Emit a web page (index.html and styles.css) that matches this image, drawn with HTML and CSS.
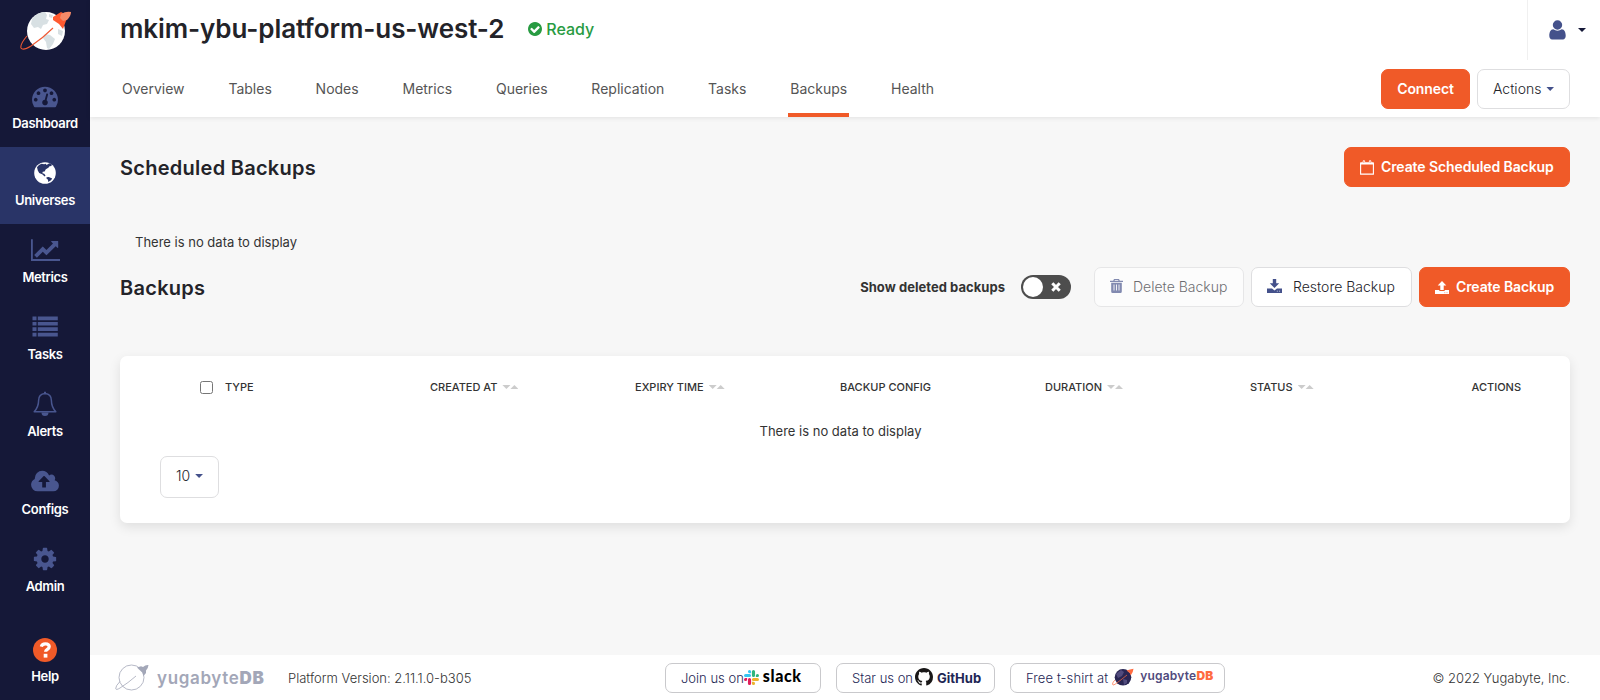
FILE: index.html
```html
<!DOCTYPE html>
<html lang="en">
<head>
<meta charset="utf-8">
<title>mkim-ybu-platform-us-west-2 | Backups</title>
<link rel="stylesheet" href="styles.css">
</head>
<body>
<div class="app">
  <aside class="sidebar">
    <a class="brand">
      <svg width="52" height="40" viewBox="0 0 52 40">
        <circle cx="26" cy="20" r="19" fill="#fff"/>
        <path fill="#d8e0e3" d="M12 8q5-7 13-7l2 3-1 4 3 1-2 4-4 1-2 4-3-2-4 1-3-4zM29 3l4 1-1 3-3-1zM25 23l5 1 5 4-2 5-4 5-2-1-1-6-3-4zM38 18l5 2-1 5-4-2z"/>
        <path d="M33 17Q23 27 11 35 3 40 1 37 0 33 7 25" fill="none" stroke="#f05a35" stroke-width="1.1"/>
        <path fill="#ff5a30" d="M33 6l8-5 4 2 2 4-4 11-4-5-6-4z"/>
        <path fill="#f58a68" d="M41 3q5-3 10-2 0 4-4 8l-4 1-3-3z"/>
      </svg>
    </a>
    <nav class="side-nav">
      <a class="side-item">
        <svg class="side-icon" width="26" height="26" viewBox="0 0 1792 1792"><path d="M384 1152q0-53-37.500-90.500t-90.500-37.500-90.500 37.500-37.500 90.500 37.500 90.500 90.500 37.500 90.500-37.500 37.500-90.500zm192-448q0-53-37.500-90.500t-90.500-37.500-90.500 37.500-37.500 90.500 37.500 90.500 90.500 37.500 90.500-37.500 37.500-90.500zm428 481l101-382q6-26-7.500-48.500t-38.500-29.500-48 6.500-30 39.500l-101 382q-60 5-107 43.500t-63 98.500q-20 77 20 146t117 89 146-20 89-117q16-60-6-117t-72-91zm660-33q0-53-37.500-90.500t-90.500-37.500-90.500 37.500-37.500 90.500 37.500 90.500 90.500 37.500 90.500-37.500 37.500-90.500zm-640-640q0-53-37.500-90.500t-90.500-37.500-90.500 37.500-37.500 90.500 37.500 90.500 90.500 37.500 90.500-37.500 37.500-90.500zm448 192q0-53-37.500-90.500t-90.500-37.500-90.500 37.500-37.500 90.500 37.500 90.500 90.500 37.500 90.500-37.500 37.500-90.500zm320 448q0 261-141 483-19 29-54 29h-1402q-35 0-54-29-141-221-141-483 0-182 71-348t191-286 286-191 348-71 348 71 286 191 191 286 71 348z"/></svg>
        <span>Dashboard</span>
      </a>
      <a class="side-item active">
        <svg class="side-icon" width="26" height="26" viewBox="0 0 26 26"><circle cx="13" cy="13" r="10.800"/><g fill="#293467"><path d="M9.500 3.800L7 5 5 7.200l.8 3.200 1.400 2.500 3 1.300 2.500 2.300.8-.9-1.300-1.800-1.800-.6.300-1.500 1.900-.1 1.200-2.300 2.600-1.500 1.100-1.500 2-.3.200-1.700-2.200-1-1.500.6-1.300 1.200-1-1.300-1.500.4z"/><path d="M14.500 17.300l2.300-.2 3.400 1.300-1.200 1.900-2.800 1.700-.2-2.200-1.500-1.300z"/></g></svg>
        <span>Universes</span>
      </a>
      <a class="side-item">
        <svg class="side-icon" width="29" height="26" viewBox="0 0 2048 1792"><path d="M2048 1536v128h-2048v-1536h128v1408h1920zm-128-1248v435q0 21-19.500 29.500t-35.500-7.500l-121-121-633 633q-10 10-23 10t-23-10l-233-233-416 416-192-192 585-585q10-10 23-10t23 10l233 233 464-464-121-121q-16-16-7.500-35.500t29.500-19.500h435q14 0 23 9t9 23z"/></svg>
        <span>Metrics</span>
      </a>
      <a class="side-item">
        <svg class="side-icon" width="26" height="26" viewBox="0 0 26 26"><path d="M.5 2.500h4v3.700h-4zM5.800 2.500h20v3.700h-20zM.5 7.900h4v3.700h-4zM5.800 7.900h20v3.700h-20zM.5 13.300h4v3.700h-4zM5.800 13.300h20v3.700h-20zM.5 18.700h4v3.700h-4zM5.800 18.700h20v3.700h-20z"/></svg>
        <span>Tasks</span>
      </a>
      <a class="side-item">
        <svg class="side-icon" width="26" height="26" viewBox="0 0 26 26"><path d="M13 2.600c-4 .3-6.400 3-6.400 7 0 5-1.400 8-4.400 11.200h21.600c-3-3.200-4.400-6.200-4.400-11.200 0-4-2.400-6.700-6.400-7z" fill="none" stroke="#49568f" stroke-width="1.500" stroke-linejoin="round"/><path d="M12 .8h2v2h-2zM9.500 21.400h7a3.500 3.500 0 0 1-7 0z"/></svg>
        <span>Alerts</span>
      </a>
      <a class="side-item configs">
        <svg class="side-icon" width="28" height="26" viewBox="0 0 1920 1792"><path d="M1280 864q0-14-9-23l-352-352q-9-9-23-9t-23 9l-351 351q-10 12-10 24 0 14 9 23t23 9h224v352q0 13 9.500 22.500t22.500 9.500h192q13 0 22.500-9.500t9.500-22.500v-352h224q13 0 22.500-9.500t9.500-22.500zm640 288q0 159-112.500 271.500t-271.500 112.500h-1088q-185 0-316.500-131.500t-131.500-316.500q0-130 70-240t188-165q-2-30-2-43 0-212 150-362t362-150q156 0 285.500 87t188.500 231q71-62 166-62 106 0 181 75t75 181q0 76-41 138 130 31 213.500 135.500t83.500 238.500z"/></svg>
        <span>Configs</span>
      </a>
      <a class="side-item">
        <svg class="side-icon" width="26" height="26" viewBox="0 0 1792 1792"><path d="M1152 896q0-106-75-181t-181-75-181 75-75 181 75 181 181 75 181-75 75-181zm512-109v222q0 12-8 23t-20 13l-185 28q-19 54-39 91 35 50 107 138 10 12 10 25t-9 23q-27 37-99 108t-94 71q-12 0-26-9l-138-108q-44 23-91 38-16 136-29 186-7 28-36 28h-222q-14 0-24.500-8.500t-11.500-21.500l-28-184q-49-16-90-37l-141 107q-10 9-25 9-14 0-25-11-126-114-165-168-7-10-7-23 0-12 8-23 15-21 51-66.500t54-70.500q-27-50-41-99l-183-27q-13-2-21-12.500t-8-23.500v-222q0-12 8-23t19-13l186-28q14-46 39-92-40-57-107-138-10-12-10-24 0-10 9-23 26-36 98.500-107.500t94.500-71.500q13 0 26 10l138 107q44-23 91-38 16-136 29-186 7-28 36-28h222q14 0 24.500 8.500t11.500 21.500l28 184q49 16 90 37l142-107q9-9 24-9 13 0 25 10 129 119 165 170 7 8 7 22 0 12-8 23-15 21-51 66.500t-54 70.500q26 50 41 98l183 28q13 2 21 12.500t8 23.500z"/></svg>
        <span>Admin</span>
      </a>
    </nav>
    <a class="side-item help">
      <svg width="24" height="24" viewBox="0 0 24 24"><circle cx="12" cy="12" r="12" fill="#f05a28"/><path d="M8.300 8.600c.5-1.900 2-2.800 4-2.800 2.300 0 3.900 1.200 3.900 3 0 2.700-3.600 2.500-3.600 5" fill="none" stroke="#fff" stroke-width="3.200"/><path d="M10.700 15.800h3.700v3.800h-3.700z" fill="#fff"/></svg>
      <span>Help</span>
    </a>
  </aside>

  <div class="page">
    <header class="header">
      <div class="title-row">
        <h1>mkim-ybu-platform-us-west-2</h1>
        <span class="status"><svg width="14" height="14" viewBox="128 128 1536 1536"><path fill="#289b42" d="M1412 734q0-28-18-46l-91-90q-19-19-45-19t-45 19l-408 407-226-226q-19-19-45-19t-45 19l-91 90q-18 18-18 46 0 27 18 45l362 362q19 19 45 19 27 0 46-19l543-543q18-18 18-45zm252 162q0 209-103 385.500t-279.500 279.500-385.500 103-385.500-103-279.500-279.500-103-385.500 103-385.500 279.500-279.500 385.500-103 385.500 103 279.500 279.500 103 385.500z"/></svg>Ready</span>
        <div class="user-menu">
          <svg width="17" height="20" viewBox="0 0 17 20"><path fill="#44518b" d="M13.200 5a4.700 4.700 0 1 1-9.400 0 4.700 4.700 0 0 1 9.400 0zM4.300 9.200c2.500 1.900 5.900 1.900 8.400 0 2.800.1 4 3.200 4 6.600 0 2-1 3.700-2.800 3.700H3.100C1.300 19.500.3 17.800.3 15.800c0-3.400 1.200-6.500 4-6.600z"/></svg>
          <i class="caret caret-dark"></i>
        </div>
      </div>
      <div class="tab-row">
        <nav class="tabs">
          <a>Overview</a><a>Tables</a><a>Nodes</a><a>Metrics</a><a>Queries</a><a>Replication</a><a>Tasks</a><a class="active">Backups</a><a>Health</a>
        </nav>
        <div class="header-actions">
          <button class="btn primary connect">Connect</button>
          <button class="btn actions">Actions<i class="caret"></i></button>
        </div>
      </div>
    </header>

    <main class="content">
      <div class="section-head">
        <h2>Scheduled Backups</h2>
        <button class="btn primary scheduled"><svg width="14" height="15" viewBox="0 0 14 15"><path d="M.6 3h12.800v11.100H.6zM3.900 4V.8M10.100 4V.8" fill="none" stroke="#fff" stroke-width="1.100"/><path d="M.6 2.500h12.800v2H.6zM2.700 1q1.200-1.500 2.400 0v2.500H2.700zM8.900 1q1.200-1.500 2.400 0v2.500H8.900z" fill="#fff"/><path d="M3.900 1.200v1.600M10.100 1.200v1.600" stroke="#f05a28" stroke-width=".8"/></svg><span>Create Scheduled Backup</span></button>
      </div>
      <p class="empty-note">There is no data to display</p>
      <div class="section-head backups-head">
        <h2>Backups</h2>
        <div class="toolbar">
          <span class="toggle-label">Show deleted backups</span>
          <span class="toggle"><i class="knob"></i><svg width="10" height="10" viewBox="0 0 10 10"><path d="M1.300 1.300l7.400 7.400M8.700 1.300L1.300 8.700" stroke="#fff" stroke-width="3"/></svg></span>
          <button class="btn delete" disabled><svg width="13" height="14" viewBox="0 0 13 14"><path fill="#44518b" d="M4 0h5l.8 1.800H13v1.300H0V1.800h3.200zM4.900 1l-.4.800h4L8.100 1zM1.200 3.800h10.600V12.500q0 1.500-1.400 1.500H2.600q-1.400 0-1.400-1.500z"/><path d="M4 5.500v6M6.500 5.500v6M9 5.500v6" stroke="#fff" stroke-width=".9"/></svg><span>Delete Backup</span></button>
          <button class="btn restore"><svg width="15" height="14" viewBox="0 0 15 14"><path fill="#44518b" d="M5.800 0h3.400v4.200h3L7.500 8.900 2.800 4.200h3zM0 9.400h5L7.500 11.400 10 9.400h5V14H0z"/><path d="M9.800 12.200h1.100M12 12.200h1.100" stroke="#fff" stroke-width=".6"/></svg><span>Restore Backup</span></button>
          <button class="btn primary create"><svg width="14" height="13" viewBox="0 0 14 13"><path fill="#fff" d="M7 0l4.300 4.400H8.700V9H5.300V4.400H2.700zM0 9h4.300v1h5.400V9H14v4H0z"/><path d="M9.300 11.700h1M11.500 11.700h1" stroke="#f05a28" stroke-width=".6"/></svg><span>Create Backup</span></button>
        </div>
      </div>

      <section class="card">
        <div class="table-head">
          <span class="check"><input type="checkbox" aria-label="Select all"></span>
          <span>TYPE</span>
          <span>CREATED AT<i class="sort"></i></span>
          <span>EXPIRY TIME<i class="sort"></i></span>
          <span>BACKUP CONFIG</span>
          <span>DURATION<i class="sort"></i></span>
          <span>STATUS<i class="sort"></i></span>
          <span class="last">ACTIONS</span>
        </div>
        <p class="table-empty">There is no data to display</p>
        <button class="btn page-size">10<i class="caret"></i></button>
      </section>
    </main>

    <footer class="footer">
      <div class="footer-brand">
        <svg width="34" height="27" viewBox="0 0 34 27"><g fill="none" stroke="#a3a7b8" stroke-width=".8"><circle cx="16.500" cy="13.500" r="12.500"/><path d="M21 12Q13 19 5 24 1 26.500.7 24.500.5 22 5 17.500"/></g><path fill="#a3a7b8" d="M22 3.500L26 2.200 28 3Q30.500.7 33.500 1 33.300 4 31 6.500L31 9l-2.500 3-1.200-3.500L24 5.500z"/></svg>
        <span class="yb">yugabyte<b>DB</b></span>
      </div>
      <span class="version">Platform Version: 2.11.1.0-b305</span>
      <div class="links">
        <a class="link slack">Join us on<svg width="15" height="15" viewBox="0 0 122.800 122.800"><path fill="#e01e5a" d="M25.800 77.600a12.900 12.900 0 1 1-12.900-12.900h12.900zM32.300 77.600a12.900 12.900 0 1 1 25.800 0v32.300a12.900 12.900 0 1 1-25.800 0z"/><path fill="#36c5f0" d="M45.200 25.800a12.900 12.900 0 1 1 12.900-12.900v12.900zM45.200 32.300a12.900 12.900 0 1 1 0 25.800H12.900a12.900 12.900 0 1 1 0-25.800z"/><path fill="#2eb67d" d="M97 45.200a12.900 12.900 0 1 1 12.900 12.900H97zM90.500 45.200a12.900 12.900 0 1 1-25.800 0V12.900a12.900 12.900 0 1 1 25.800 0z"/><path fill="#ecb22e" d="M77.600 97a12.900 12.900 0 1 1-12.900 12.900V97zM77.600 90.500a12.900 12.900 0 1 1 0-25.800h32.300a12.900 12.900 0 1 1 0 25.800z"/></svg><b>slack</b></a>
        <a class="link github">Star us on<svg width="18" height="18" viewBox="0 0 16 16"><path fill="#191717" d="M8 0C3.580 0 0 3.580 0 8c0 3.540 2.290 6.530 5.470 7.590.4.070.55-.17.55-.38 0-.19-.01-.82-.01-1.490-2.010.37-2.530-.49-2.690-.94-.09-.23-.48-.94-.82-1.130-.28-.15-.68-.52-.01-.53.63-.01 1.080.58 1.230.82.72 1.210 1.870.87 2.330.66.07-.52.28-.87.51-1.070-1.780-.2-3.640-.89-3.640-3.950 0-.87.31-1.590.82-2.150-.08-.2-.36-1.020.08-2.120 0 0 .67-.21 2.200.82.64-.18 1.320-.27 2-.27s1.360.09 2 .27c1.530-1.040 2.200-.82 2.200-.82.44 1.100.16 1.920.08 2.120.51.56.82 1.270.82 2.150 0 3.070-1.870 3.750-3.650 3.950.29.25.54.73.54 1.480 0 1.070-.01 1.930-.01 2.200 0 .21.15.46.55.38A8.010 8.010 0 0 0 16 8c0-4.420-3.580-8-8-8z"/></svg><b>GitHub</b></a>
        <a class="link shirt">Free t-shirt at<svg width="22" height="18" viewBox="0 0 22 18"><circle cx="11" cy="9.300" r="8.300" fill="#292653"/><path d="M4 6l5-4 3 2-2 4-4 2zM11 11l4 1 0 3-3 2z" fill="#514b7d"/><path d="M15 7Q9 12 3 16.300.5 18 .5 16 .7 14 3 12" fill="none" stroke="#ff6b40" stroke-width=".7"/><path d="M14.500 2.500L18 1.500 21.500.7 20.700 4l-2 3.500-1-2.500z" fill="#ff6b40"/></svg><span class="yb small">yugabyte<b>DB</b></span></a>
      </div>
      <span class="copyright">© 2022 Yugabyte, Inc.</span>
    </footer>
  </div>
</div>
</body>
</html>
```
FILE: styles.css
```css
* { box-sizing: border-box; }
body {
  margin: 0;
  background: #f7f7f7;
  color: #333;
  font: 13px/18px Inter, "Liberation Sans", sans-serif;
  white-space: nowrap;
}
h1, h2, p { margin: 0; }
svg { display: block; flex: none; }
button { font-family: inherit; }

.app { display: flex; height: 700px; overflow: hidden; }

/* Sidebar */
.sidebar {
  width: 90px;
  flex: none;
  display: flex;
  flex-direction: column;
  background: #151838;
}
.brand { height: 70px; padding: 11px 0 0 20px; }
.side-item {
  height: 77.100px;
  padding-top: 13px;
  display: flex;
  flex-direction: column;
  align-items: center;
  gap: 5px;
  color: #fff;
  font-size: 13px;
  font-weight: 600;
  line-height: 18px;
  letter-spacing: -.35px;
}
.side-item.configs { padding-top: 13.600px; }
.side-icon { fill: #49568f; height: 26px; }
.side-item.active { background: #293467; }
.side-item.active .side-icon { fill: #fff; }
.side-item.help { margin-top: auto; height: 62px; padding-top: 0; }

/* Header */
.page { flex: 1; min-width: 0; display: flex; flex-direction: column; }
.header {
  height: 117px;
  flex: none;
  background: #fff;
  box-shadow: 0 1px 5px rgba(0, 0, 0, .09);
}
.title-row { height: 60px; padding-left: 30px; display: flex; align-items: flex-start; }
h1 {
  margin-top: 13px;
  color: #232329;
  font-size: 26px;
  font-weight: 600;
  line-height: 32px;
  letter-spacing: -.09px;
}
.status {
  margin: 19px 0 0 24px;
  display: flex;
  align-items: center;
  gap: 4px;
  color: #289b42;
  font-size: 16px;
  font-weight: 500;
  line-height: 20px;
}
.user-menu {
  width: 73px;
  height: 60px;
  margin-left: auto;
  padding-left: 21px;
  display: flex;
  align-items: center;
  border-left: 1px solid #f0f0f0;
}
.tab-row { height: 57px; padding: 0 30px; display: flex; justify-content: space-between; }
.tabs { display: flex; gap: 39.820px; }
.tabs a {
  padding: 19px 2px 0;
  color: #555;
  font-size: 14px;
  line-height: 20px;
  border-bottom: 4px solid transparent;
}
.tabs a.active { border-color: #f05a28; }
.header-actions { display: flex; gap: 7px; padding-top: 9px; }

.caret {
  width: 8px;
  height: 4px;
  background: #44518b;
  clip-path: polygon(0 0, 100% 0, 50% 100%);
}
.caret-dark { margin-left: 12px; background: #151838; }

/* Buttons */
.btn {
  height: 40px;
  padding: 0 15px;
  display: flex;
  align-items: center;
  border: 1px solid #dedee0;
  border-radius: 7px;
  background: #fff;
  color: #232329;
  font-size: 14px;
  font-weight: 300;
  line-height: 20px;
}
.btn.primary { border-color: #f05a28; background: #f05a28; color: #fff; font-weight: 600; }
.btn .caret { margin-left: 5px; }
.btn.connect { width: 89px; justify-content: center; letter-spacing: -.1px; }
.actions { width: 93px; }
.scheduled { width: 226px; gap: 7px; letter-spacing: -.1px; }
.delete { width: 150px; gap: 10px; opacity: .65; }
.restore { width: 161px; gap: 11px; }
.create { width: 151px; gap: 7px; letter-spacing: -.1px; }
.delete svg, .restore svg { margin-top: -3px; }

/* Content */
.content { flex: 1; padding: 30px 30px 0; }
.section-head { height: 40px; display: flex; align-items: center; justify-content: space-between; }
h2 {
  padding-top: 2px;
  color: #232329;
  font-size: 20px;
  font-weight: 600;
  line-height: 24px;
  letter-spacing: .27px;
}
.empty-note { margin: 46px 0 16px 15px; }
.toolbar { display: flex; align-items: center; gap: 7px; }
.toggle-label { margin-right: 9px; font-weight: 700; letter-spacing: .04px; }
.toggle {
  width: 50px;
  height: 24px;
  margin-right: 16px;
  padding: 0 10px 0 2px;
  display: flex;
  align-items: center;
  justify-content: space-between;
  border-radius: 12px;
  background: #4d4d4d;
}
.knob { width: 20px; height: 20px; border-radius: 50%; background: #fff; }

/* Table */
.card {
  height: 167px;
  margin-top: 49px;
  padding: 20px 40px 0;
  border-radius: 7px;
  background: #fff;
  box-shadow: 0 4px 12px rgba(0, 0, 0, .1);
}
.table-head {
  height: 22px;
  display: grid;
  grid-template-columns: 65px repeat(6, 205px) 1fr;
  align-items: center;
  font-size: 11px;
  font-weight: 500;
}
.table-head span { display: flex; align-items: center; }
.table-head .check { padding-left: 40px; }
.check input { margin: 1px 0 0; width: 13px; height: 13px; }
.table-head .last { justify-content: flex-end; padding-right: 9px; }
.sort {
  width: 16px;
  height: 4px;
  margin-left: 5px;
  background: #ccc;
  clip-path: polygon(0 0, 8px 0, 4px 100%, 8px 100%, 12px 0, 16px 100%, 4px 100%);
}
.table-empty { margin-top: 23px; padding-right: 9px; text-align: center; line-height: 20px; }
.page-size { width: 59px; height: 42px; margin-top: 15px; padding-bottom: 2px; }

/* Footer */
.footer {
  height: 45px;
  flex: none;
  padding: 0 30px 0 25px;
  display: flex;
  align-items: center;
  background: #fff;
  font-weight: 300;
}
.footer-brand { width: 173px; flex: none; display: flex; align-items: center; gap: 8px; }
.yb { color: #a3a7b8; font-size: 17px; font-weight: 600; letter-spacing: .65px; }
.version { width: 377px; flex: none; }
.links { display: flex; gap: 15px; color: #1e2655; }
.link {
  height: 30px;
  flex: none;
  padding: 0 0 0 15px;
  display: flex;
  align-items: center;
  border: 1px solid #c9c9cc;
  border-radius: 7px;
}
.slack { width: 156px; }
.slack b { margin: -3px 0 0 4px; color: #000; font: 900 16px/18px Lato, sans-serif; letter-spacing: .6px; }
.github { width: 159px; }
.github svg { margin: -2px 0 0 2px; }
.github b { margin-left: 4px; font-weight: 700; }
.shirt { width: 215px; letter-spacing: .1px; }
.shirt svg { margin: -2px 0 0 4px; }
.yb.small { margin: -3px 0 0 6px; color: #514b7d; font-size: 12px; letter-spacing: .2px; }
.yb.small b { color: #ff6b40; }
.copyright { margin-left: auto; }
```
